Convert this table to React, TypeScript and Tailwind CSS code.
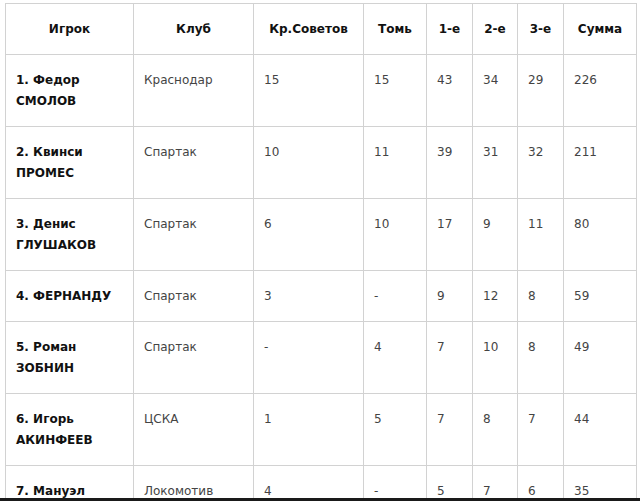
const headers = ['Игрок', 'Клуб', 'Кр.Советов', 'Томь', '1-е', '2-е', '3-е', 'Сумма'];

const widths = ['w-[128px]', 'w-[120px]', 'w-[110px]', 'w-[63px]', 'w-[46px]', 'w-[45px]', 'w-[46px]', 'w-[73px]'];

const rows = [
  { first: '1. Федор', last: 'СМОЛОВ', club: 'Краснодар', vals: ['15', '15', '43', '34', '29', '226'] },
  { first: '2. Квинси', last: 'ПРОМЕС', club: 'Спартак', vals: ['10', '11', '39', '31', '32', '211'] },
  { first: '3. Денис', last: 'ГЛУШАКОВ', club: 'Спартак', vals: ['6', '10', '17', '9', '11', '80'] },
  { first: '4. ФЕРНАНДУ', last: '', club: 'Спартак', vals: ['3', '-', '9', '12', '8', '59'] },
  { first: '5. Роман', last: 'ЗОБНИН', club: 'Спартак', vals: ['-', '4', '7', '10', '8', '49'] },
  { first: '6. Игорь', last: 'АКИНФЕЕВ', club: 'ЦСКА', vals: ['1', '5', '7', '8', '7', '44'] },
  { first: '7. Мануэл', last: '', club: 'Локомотив', vals: ['4', '-', '5', '7', '6', '35'] },
];

export default function App() {
  return (
    <div className="relative h-[501px] w-[640px] overflow-hidden bg-white font-['DejaVu_Sans',sans-serif] text-[12px] leading-[21px]">
      <div className="pl-[5px] pt-[3px]">
        <table className="w-[631px] table-fixed border-collapse border border-[#d2d2d2]">
          <colgroup>
            {widths.map((w, i) => (
              <col key={i} className={w} />
            ))}
          </colgroup>
          <thead>
            <tr>
              {headers.map((h) => (
                <th key={h} className="h-[51px] border border-[#d2d2d2] p-0 text-center font-bold text-[#111]">
                  {h}
                </th>
              ))}
            </tr>
          </thead>
          <tbody>
            {rows.map((r) => (
              <tr key={r.first}>
                <td className="border border-[#d2d2d2] px-[10px] pt-[15px] pb-[14px] align-top font-bold text-[#111]">
                  <div>{r.first}</div>
                  {r.last && <div>{r.last}</div>}
                </td>
                <td className="border border-[#d2d2d2] px-[10px] pt-[15px] pb-[14px] align-top text-[#444]">{r.club}</td>
                {r.vals.map((v, i) => (
                  <td key={i} className="border border-[#d2d2d2] px-[10px] pt-[15px] pb-[14px] align-top text-[#444]">
                    {v}
                  </td>
                ))}
              </tr>
            ))}
          </tbody>
        </table>
      </div>
      <div className="absolute bottom-0 left-0 h-[3px] w-full bg-[#1a1a1a]" />
    </div>
  );
}
